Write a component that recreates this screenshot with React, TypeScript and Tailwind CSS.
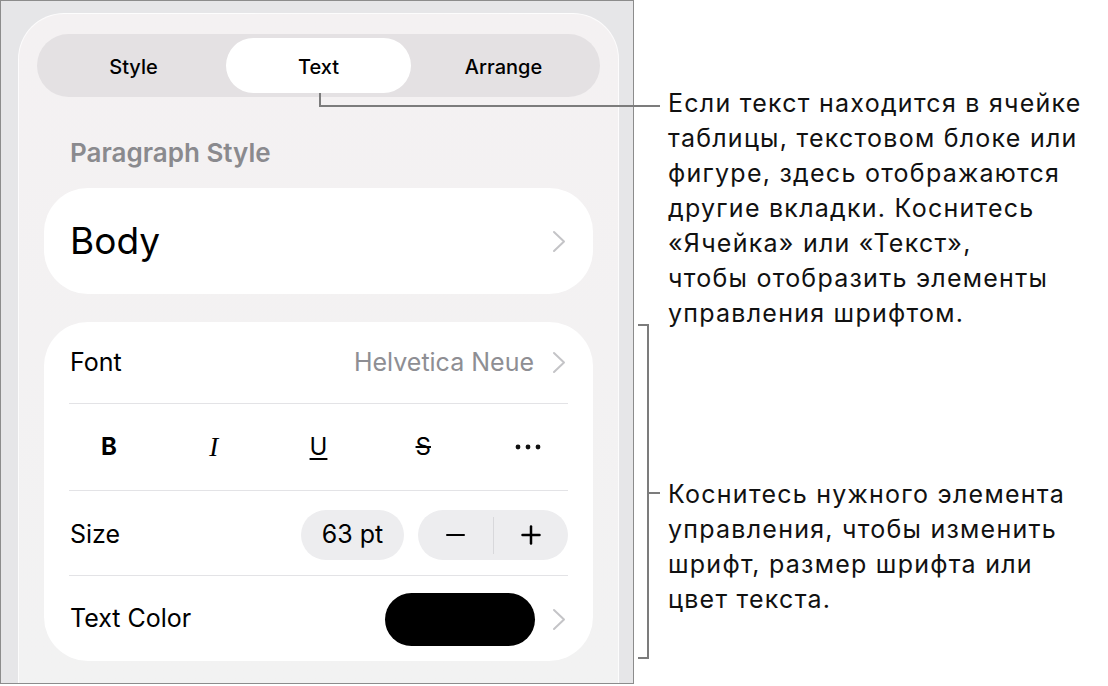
import React from 'react';

const Chevron = () => (
  <svg width="14" height="23" viewBox="0 0 14 23" fill="none" stroke="#c4c4c7" strokeWidth="2" strokeLinecap="round" strokeLinejoin="round">
    <polyline points="2,2 12,11.5 2,21" />
  </svg>
);

const Dots = () => (
  <svg width="26" height="6" viewBox="0 0 26 6" fill="#111">
    <circle cx="3" cy="3" r="2.4" />
    <circle cx="13" cy="3" r="2.4" />
    <circle cx="23" cy="3" r="2.4" />
  </svg>
);

const App = () => {
  return (
    <div className="relative flex w-[1108px] h-[686px] bg-white font-['Inter',sans-serif] text-black">
      {/* device screenshot */}
      <div className="w-[634px] h-[684px] border border-[#8c8c8c] bg-[#e6e6e8] pl-[17px] pt-[12px] pr-[14px] overflow-hidden">
        <div className="h-full rounded-t-[46px] border border-b-0 border-white/80 bg-gradient-to-b from-[#f4f1f2] to-[#f2f2f2] px-[18px] pt-[20px]">
          {/* tabs */}
          <div className="grid grid-cols-3 h-[63px] rounded-full bg-[#e4e1e3] p-[4px] text-[20px] font-medium">
            <div className="flex items-center justify-center pt-[3px]">Style</div>
            <div className="flex items-center justify-center rounded-full bg-white pt-[3px]">Text</div>
            <div className="flex items-center justify-center pt-[3px]">Arrange</div>
          </div>

          <div className="px-[7px]">
            <div className="mt-[41px] pl-[26px] text-[26px] leading-[30px] font-semibold text-[#8a8a8e]">Paragraph Style</div>

            {/* body card */}
            <div className="mt-[20px] flex h-[106px] items-center justify-between rounded-[44px] bg-white pl-[26px] pr-[27px]">
              <span className="text-[37px]">Body</span>
              <Chevron />
            </div>

            {/* font card */}
            <div className="mt-[28px] h-[339px] rounded-[44px] bg-white px-[25px] text-[25px]">
              <div className="flex h-[82px] items-center justify-between border-b border-[#e3e3e6] pl-[1px] pr-[2px]">
                <span>Font</span>
                <div className="flex items-center gap-[18px]">
                  <span className="text-[#8e8e93]">Helvetica Neue</span>
                  <Chevron />
                </div>
              </div>

              <div className="flex h-[87px] items-center justify-between border-b border-[#e3e3e6]">
                <div className="flex w-[80px] justify-center text-[24px] font-bold">B</div>
                <div className="flex w-[80px] justify-center font-['Liberation_Serif',serif] text-[27px] italic">I</div>
                <div className="flex w-[80px] justify-center text-[24px] underline underline-offset-[3px] decoration-[2px]">U</div>
                <div className="flex w-[80px] justify-center text-[24px] line-through decoration-[2px]">S</div>
                <div className="flex w-[80px] justify-center"><Dots /></div>
              </div>

              <div className="flex h-[85px] items-center justify-between border-b border-[#e3e3e6] pl-[1px] pt-[4px]">
                <span>Size</span>
                <div className="flex items-center gap-[14px]">
                  <div className="flex h-[50px] w-[103px] items-center justify-center rounded-full bg-[#ededef]">63 pt</div>
                  <div className="flex h-[50px] w-[150px] items-center rounded-full bg-[#ededef]">
                    <div className="flex flex-1 items-center justify-center">
                      <div className="h-[2.5px] w-[19px] rounded bg-black" />
                    </div>
                    <div className="h-[37px] w-[1px] bg-[#d8d8db]" />
                    <div className="flex flex-1 items-center justify-center">
                      <svg width="20" height="20" viewBox="0 0 20 20" stroke="#000" strokeWidth="2.5" strokeLinecap="round">
                        <line x1="10" y1="1.5" x2="10" y2="18.5" />
                        <line x1="1.5" y1="10" x2="18.5" y2="10" />
                      </svg>
                    </div>
                  </div>
                </div>
              </div>

              <div className="flex h-[84px] items-center justify-between pl-[1px] pr-[2px] pt-[2px]">
                <span>Text Color</span>
                <div className="flex items-center gap-[17px]">
                  <div className="h-[53px] w-[150px] rounded-full bg-black" />
                  <Chevron />
                </div>
              </div>
            </div>
          </div>
        </div>
      </div>

      {/* callouts */}
      <div className="flex flex-col pl-[34px] pt-[86px] text-[25px] leading-[35px] tracking-[0.05em] text-[#111]">
        <p>
          Если текст находится в ячейке<br />
          таблицы, текстовом блоке или<br />
          фигуре, здесь отображаются<br />
          другие вкладки. Коснитесь<br />
          «Ячейка» или «Текст»,<br />
          чтобы отобразить элементы<br />
          управления шрифтом.
        </p>
        <p className="mt-[146px]">
          Коснитесь нужного элемента<br />
          управления, чтобы изменить<br />
          шрифт, размер шрифта или<br />
          цвет текста.
        </p>
      </div>

      {/* leader lines */}
      <div className="absolute left-[319px] top-[93px] h-[14px] w-[2px] bg-[#7c7c7c]" />
      <div className="absolute left-[319px] top-[105px] h-[2px] w-[341px] bg-[#7c7c7c]" />
      <div className="absolute left-[638px] top-[324px] h-[335px] w-[11px] border-y-2 border-r-2 border-[#7c7c7c]" />
      <div className="absolute left-[648px] top-[492px] h-[2px] w-[12px] bg-[#7c7c7c]" />
    </div>
  );
};

export default App;
